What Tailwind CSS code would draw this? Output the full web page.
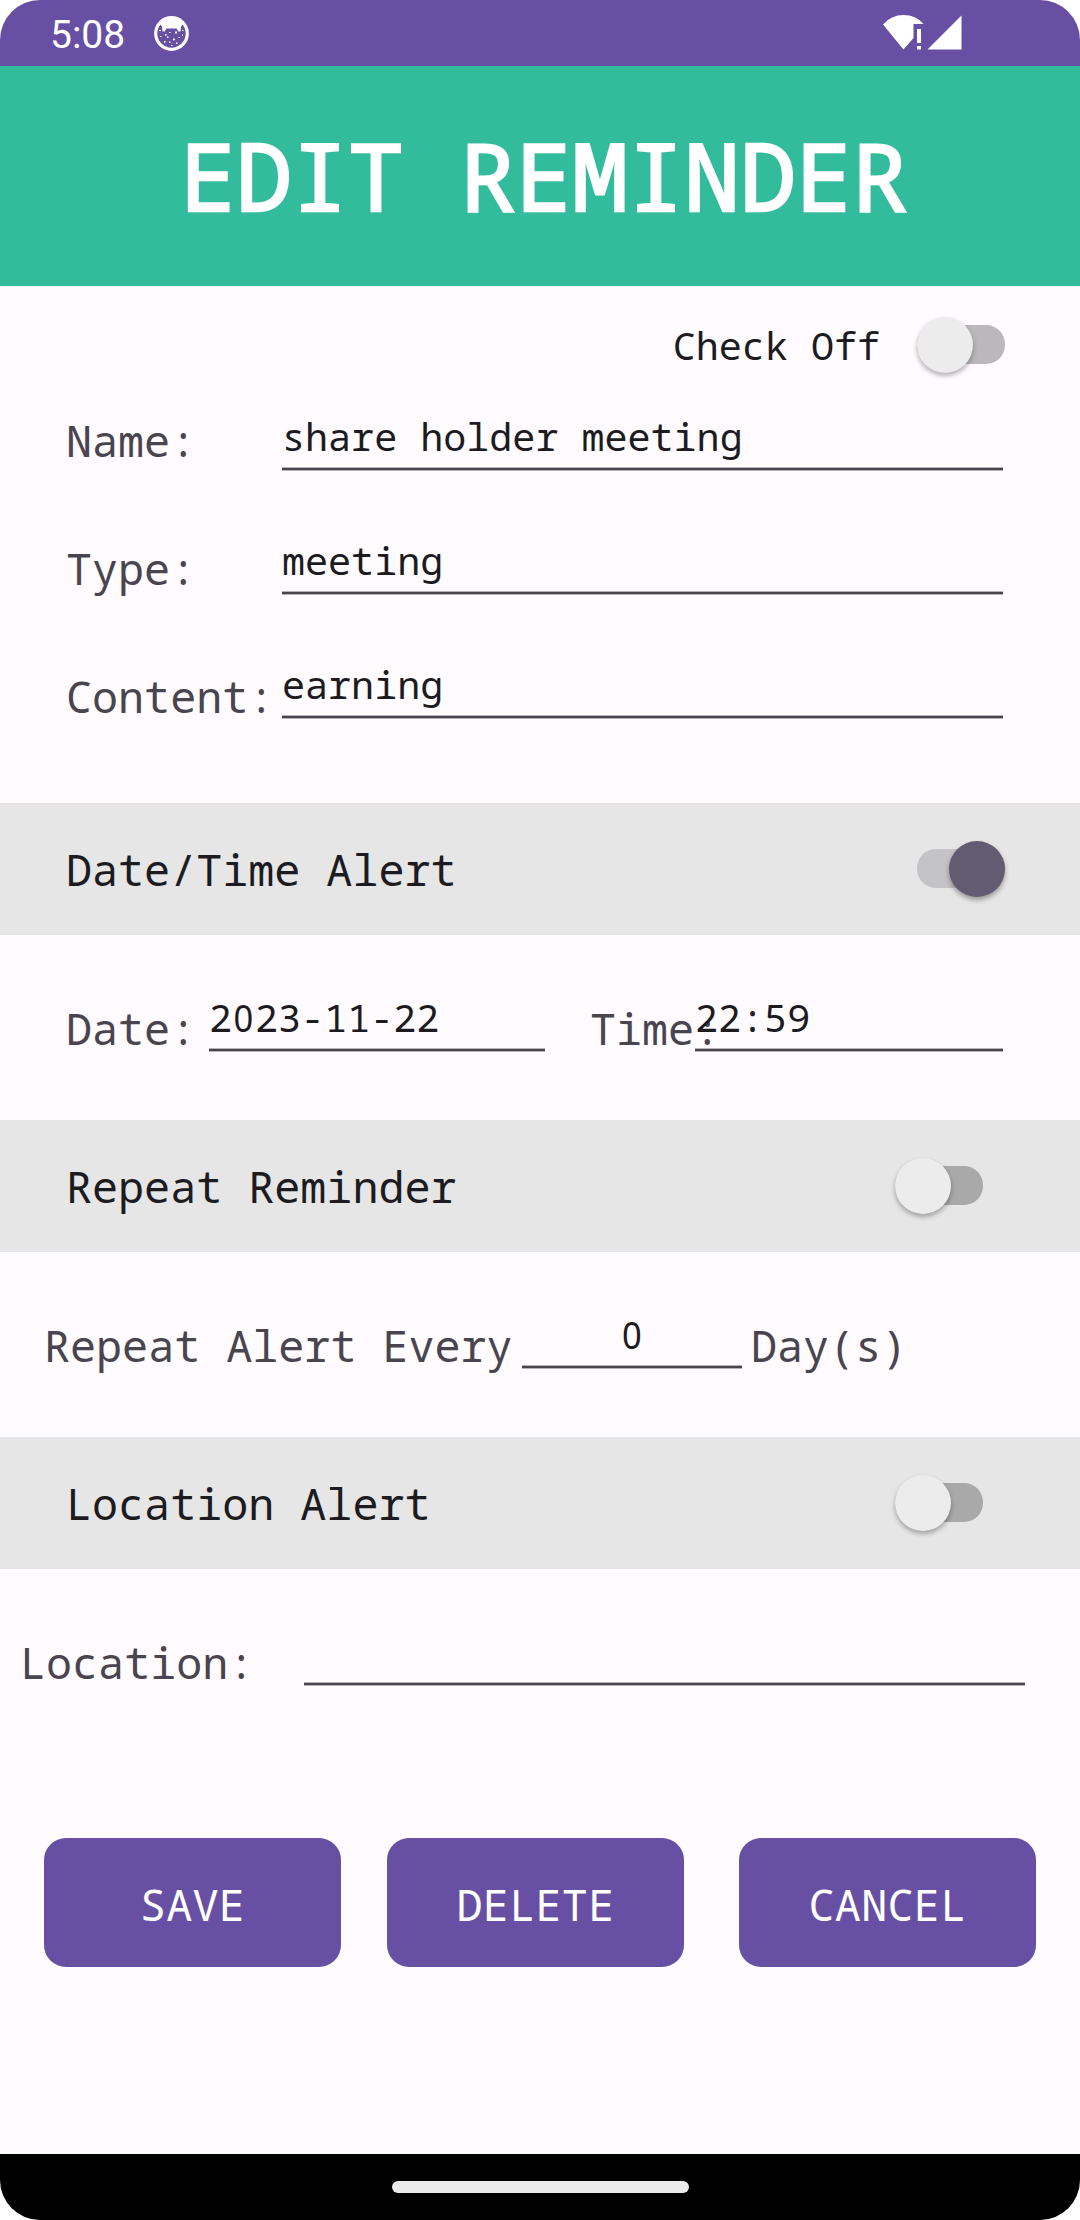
<!DOCTYPE html>
<html lang="en">
<head>
<meta charset="utf-8">
<title>Edit Reminder</title>
<script src="https://cdn.jsdelivr.net/npm/@tailwindcss/browser@4"></script>
</head>
<body class="bg-white">
<div class="w-[1080px] h-[2220px] rounded-[40px] overflow-hidden bg-[#fffbff] flex flex-col font-['Noto_Sans_Mono','DejaVu_Sans_Mono',monospace] text-[43.4px] text-[#49454f] whitespace-nowrap">

  <!-- Status bar -->
  <div class="h-[66px] shrink-0 bg-[#6750a4] flex items-start text-white">
    <div class="ml-[50px] mt-3 w-[104px] font-[Roboto,sans-serif] text-[39px] leading-[46px]">5:08</div>
    <svg class="mt-4 w-[35px] h-[35px]" viewBox="0 0 35 35">
      <circle cx="17.5" cy="17.5" r="15.8" fill="none" stroke="#fff" stroke-width="3.2"/>
      <path d="M6 8 Q10 1.500 17.500 1.500 T29 8 L27 10.500 L26.500 15.500 L24.500 15.500 L22.500 12.500 L12.500 12.500 L10.500 15.500 L8.500 15.500 L8 10.500Z" fill="#fff"/>
      <g fill="#fff">
        <rect x="5" y="14" width="2" height="1"/><rect x="11" y="18" width="1.600" height="1.600"/><rect x="15" y="16" width="1.600" height="1"/><rect x="21" y="15.500" width="2" height="2"/><rect x="28" y="14" width="1.500" height="1"/>
        <rect x="6" y="20" width="1.500" height="1"/><rect x="13" y="20.500" width="1.500" height="1.500"/><rect x="19" y="22.500" width="1.800" height="1.800"/><rect x="24.500" y="21" width="1.500" height="1"/><rect x="28" y="18.500" width="1" height="1.500"/>
        <rect x="10" y="25" width="1.600" height="1.600"/><rect x="15" y="25.500" width="1.500" height="1.500"/><rect x="22" y="26.500" width="1.500" height="1.500"/><rect x="17" y="29" width="1.500" height="1"/>
      </g>
    </svg>
    <svg class="ml-[694px] mt-[15px] w-[79px] h-[35px]" viewBox="0 0 79 35">
      <path d="M0 9.500Q8 0 20.500 0T40.500 9H30.500V23L20.500 34.500Z" fill="#fff"/>
      <path d="M34 14H38V28H34ZM34 31H38V34.500H34ZM78.500 0.500V34.500H44.500Z" fill="#fff"/>
    </svg>
  </div>

  <!-- Title -->
  <header class="h-[220px] shrink-0 bg-[#33bc9c] flex justify-center text-white pt-[9px] pl-[8px]">
    <h1 class="text-[93.3px] leading-[200px] [-webkit-text-stroke:2.4px_white]">EDIT REMINDER</h1>
  </header>

  <!-- Details -->
  <section class="h-[517px] shrink-0">
    <div class="h-[92px] flex justify-end pr-[75px] gap-[37px] text-[#1c1b1f]">
      <div class="mt-[34px] text-[38.4px] leading-[50px]">Check Off</div>
      <div class="relative mt-[31px] w-[88px] h-[56px] pt-2">
        <div class="h-[39px] rounded-[19px] bg-[#bab8ba]"></div>
        <div class="absolute left-0 top-0 size-[56px] rounded-full bg-[#ececec] shadow-[0_3px_5px_rgba(0,0,0,0.3)]"></div>
      </div>
    </div>
    <div class="flex pl-[66px]">
      <div class="w-[216px] -mt-px flex flex-col leading-[128px]">
        <div>Name:</div><div>Type:</div><div>Content:</div>
      </div>
      <div class="w-[721px] pt-[33px] flex flex-col gap-[66px] text-[38.4px] leading-[50px] text-[#1c1b1f]">
        <div class="flex flex-col gap-[6px] -mb-[2px]"><span>share holder meeting</span><div class="h-1 bg-[#49454f] border-y border-[#b5b2b8]"></div></div>
        <div class="flex flex-col gap-[6px] -mb-[2px]"><span>meeting</span><div class="h-1 bg-[#49454f] border-y border-[#b5b2b8]"></div></div>
        <div class="flex flex-col gap-[6px] -mb-[2px]"><span>earning</span><div class="h-1 bg-[#49454f] border-y border-[#b5b2b8]"></div></div>
      </div>
    </div>
  </section>

  <!-- Date/Time alert -->
  <div class="h-[132px] shrink-0 bg-[#e6e6e6] flex justify-between pl-[66px] pr-[75px] text-[#1c1b1f]">
    <div class="pt-[3px] leading-[128px]">Date/Time Alert</div>
    <div class="relative mt-[38px] w-[88px] h-[56px] pt-2">
      <div class="h-[39px] rounded-[19px] bg-[#c4c3c8]"></div>
      <div class="absolute right-0 top-0 size-[56px] rounded-full bg-[#625b71] shadow-[0_3px_5px_rgba(0,0,0,0.35)]"></div>
    </div>
  </div>
  <section class="h-[185px] shrink-0 flex pl-[66px]">
    <div class="w-[143px] pt-[64px] leading-[60px]">Date:</div>
    <div class="w-[336px] pt-[57px] flex flex-col gap-[6px] text-[38.4px] leading-[50px] text-[#1c1b1f]">
      <div class="flex"><span>2</span><span class="w-[23px] text-center scale-x-90 font-['Noto_Sans',sans-serif]">0</span><span>23-11-22</span></div>
      <div class="h-1 bg-[#49454f] border-y border-[#b5b2b8]"></div>
    </div>
    <div class="ml-[45px] w-[105px] pt-[64px] leading-[60px]">Time:</div>
    <div class="w-[308px] pt-[57px] flex flex-col gap-[6px] text-[38.4px] leading-[50px] text-[#1c1b1f]">
      <div>22:59</div>
      <div class="h-1 bg-[#49454f] border-y border-[#b5b2b8]"></div>
    </div>
  </section>

  <!-- Repeat -->
  <div class="h-[132px] shrink-0 bg-[#e6e6e6] flex justify-between pl-[66px] pr-[97px] text-[#1c1b1f]">
    <div class="pt-[3px] leading-[128px]">Repeat Reminder</div>
    <div class="relative mt-[38px] w-[88px] h-[56px] pt-2">
      <div class="h-[39px] rounded-[19px] bg-[#a9a9a9]"></div>
      <div class="absolute left-0 top-0 size-[56px] rounded-full bg-[#ececec] shadow-[0_3px_5px_rgba(0,0,0,0.3)]"></div>
    </div>
  </div>
  <section class="h-[185px] shrink-0 flex pl-[44px]">
    <div class="w-[478px] pt-[64px] leading-[60px]">Repeat Alert Every</div>
    <div class="w-[220px] pt-[57px] flex flex-col gap-[6px] text-[38.4px] leading-[50px] text-[#1c1b1f]">
      <div class="text-center scale-x-90 font-['Noto_Sans',sans-serif]">0</div>
      <div class="h-1 bg-[#49454f] border-y border-[#b5b2b8]"></div>
    </div>
    <div class="ml-[9px] pt-[64px] leading-[60px]">Day(s)</div>
  </section>

  <!-- Location -->
  <div class="h-[132px] shrink-0 bg-[#e6e6e6] flex justify-between pl-[66px] pr-[97px] text-[#1c1b1f]">
    <div class="pt-[3px] leading-[128px]">Location Alert</div>
    <div class="relative mt-[38px] w-[88px] h-[56px] pt-2">
      <div class="h-[39px] rounded-[19px] bg-[#a9a9a9]"></div>
      <div class="absolute left-0 top-0 size-[56px] rounded-full bg-[#ececec] shadow-[0_3px_5px_rgba(0,0,0,0.3)]"></div>
    </div>
  </div>
  <section class="h-[269px] shrink-0 flex pl-[20px]">
    <div class="w-[284px] pt-[64px] leading-[60px]">Location:</div>
    <div class="w-[721px] pt-[113px]"><div class="h-1 bg-[#49454f] border-y border-[#b5b2b8]"></div></div>
  </section>

  <!-- Actions -->
  <div class="h-[316px] shrink-0 flex pl-[44px] text-white text-center leading-[129px] tracking-[0.3px]">
    <button class="w-[297px] h-[129px] pt-[2px] rounded-[22px] bg-[#6750a4]">SAVE</button>
    <button class="ml-[46px] w-[297px] h-[129px] pt-[2px] rounded-[22px] bg-[#6750a4]">DELETE</button>
    <button class="ml-[55px] w-[297px] h-[129px] pt-[2px] rounded-[22px] bg-[#6750a4]">CANCEL</button>
  </div>

  <!-- Navigation bar -->
  <div class="h-[66px] shrink-0 bg-black flex justify-center pt-[27px]">
    <div class="w-[297px] h-[12px] rounded-full bg-[#ebebeb]"></div>
  </div>
</div>
</body>
</html>
